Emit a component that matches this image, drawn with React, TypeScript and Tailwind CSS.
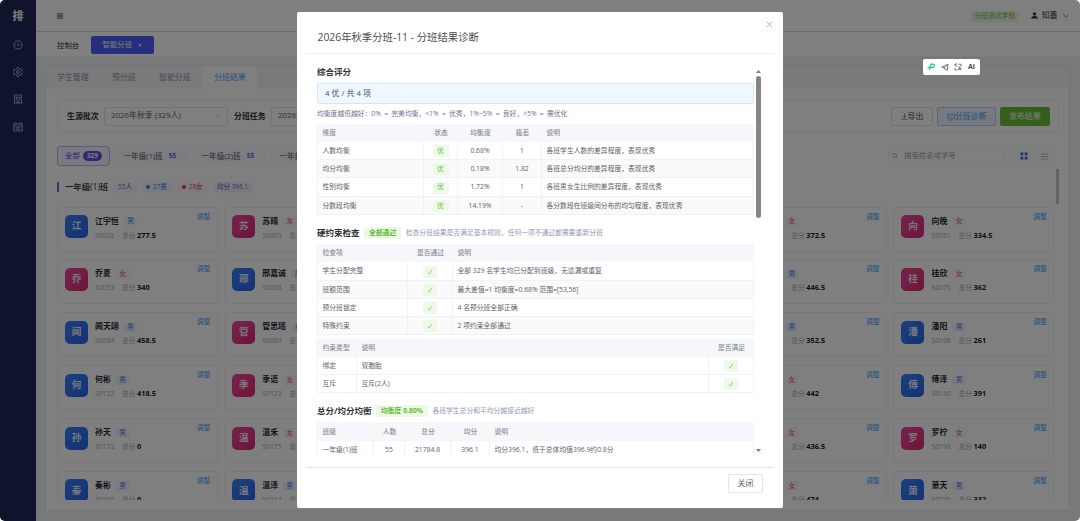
import React from 'react';

type Student = { name: string; g: 'm' | 'f'; id: string; score: string };

const s = (name: string, g: 'm' | 'f', id: string, score: string): Student => ({ name, g, id, score });

const rows: (Student | null)[][] = [
  [s('江宇恒', 'm', 'S0002', '277.5'), s('苏晴', 'f', 'S0003', '301'), null, null, s('林悦', 'f', 'S0037', '372.5'), s('向晚', 'f', 'S0051', '334.5')],
  [s('乔夏', 'f', 'S0053', '340'), s('邢嘉诚', 'm', 'S0058', '322'), null, null, s('周航', 'm', 'S0070', '446.5'), s('桂欣', 'f', 'S0075', '362')],
  [s('闻天翊', 'm', 'S0084', '458.5'), s('管思瑶', 'f', 'S0089', '410'), null, null, s('许诚', 'm', 'S0101', '352.5'), s('潘阳', 'm', 'S0106', '261')],
  [s('何彬', 'm', 'S0122', '418.5'), s('季语', 'f', 'S0123', '388'), null, null, s('叶青', 'f', 'S0142', '442'), s('傅泽', 'm', 'S0150', '391')],
  [s('孙天', 'm', 'S0172', '0'), s('温禾', 'f', 'S0175', '275'), null, null, s('沈月', 'f', 'S0190', '436.5'), s('罗柠', 'f', 'S0199', '140')],
  [s('秦彬', 'm', 'S0210', '0'), s('温泽', 'm', 'S0214', '290'), null, null, s('陆瑶', 'f', 'S0226', '474'), s('萧天', 'm', 'S0230', '332')],
];

function Card({ st }: { st: Student | null }) {
  if (!st) return <div className="h-[45px] rounded-[4px] border border-[#eff0f4]" />;
  const male = st.g === 'm';
  return (
    <div className="flex h-[45px] rounded-[4px] border border-[#eff0f4] pl-[7px] pr-[6.5px] pt-[7.5px]">
      <div
        className={
          'flex h-[23px] w-[23px] shrink-0 items-center justify-center rounded-[5px] text-[9.6px] font-bold text-white/90 ' +
          (male ? 'bg-linear-to-br from-[#3b82f6] to-[#2563eb]' : 'bg-linear-to-br from-[#ec4899] to-[#db2777]')
        }
      >
        {st.name[0]}
      </div>
      <div className="ml-[7px] flex flex-col">
        <div className="mt-[0.5px] flex h-[12px] items-center gap-[5px]">
          <span className="text-[7.9px] font-bold text-[#1f2937]">{st.name}</span>
          <span
            className={
              'flex h-[10px] items-center rounded-[2px] px-[3.5px] text-[6.8px] ' +
              (male ? 'bg-[#f1f5fe] text-[#3b82f6]' : 'bg-[#fcf6f9] text-[#ec4899]')
            }
          >
            {male ? '男' : '女'}
          </span>
        </div>
        <div className="mt-[2px] flex h-[11px] items-baseline text-[6.8px] leading-[11px] text-[#a3a8b2]">
          <span className="w-[27px]">{st.id}</span>
          <span>总分</span>
          <span className="ml-[1.5px] text-[7.3px] leading-[11px] font-bold text-[#111827]">{st.score}</span>
        </div>
      </div>
      <span className="-mt-[3.5px] ml-auto h-[10px] text-[6.8px] leading-[10px] text-[#409eff]">调整</span>
    </div>
  );
}

function Sidebar() {
  return (
    <aside className="flex w-[36px] shrink-0 flex-col items-center bg-[#1e2658] text-[#b9bed6]">
      <div className="flex h-[31px] items-center pt-[1px] text-[11px] font-bold text-white">排</div>
      <div className="mt-[9px] flex flex-col gap-[17.2px]">
        <svg className="h-[10px] w-[10px]" viewBox="0 0 20 20" fill="none" stroke="currentColor" strokeWidth="1.7">
          <path d="M6.500 17.500a8.300 8.300 0 1 1 7 0zM10 12.500V6.500M4.500 10.500h1.500M14 10.500h1.500" />
        </svg>
        <svg className="h-[10px] w-[10px]" viewBox="0 0 20 20" fill="none" stroke="currentColor" strokeWidth="1.7">
          <path d="M8 1.5h4l.8 2.4 1.8 1 2.5-.6 2 3.4L17.300 9.500v1l1.800 1.800-2 3.400-2.500-.6-1.800 1-.8 2.400H8l-.8-2.400-1.800-1-2.500.6-2-3.400 1.800-1.800v-1L.9 7.700l2-3.400 2.500.6 1.800-1z" />
          <circle cx="10" cy="10" r="3.2" />
        </svg>
        <svg className="h-[10px] w-[10px]" viewBox="0 0 20 20" fill="none" stroke="currentColor" strokeWidth="1.6">
          <path d="M3 18V2h14v16M1 18h18M6 6h2.500v2.500H6zM11.500 6H14v2.500h-2.500zM6 11h2.500M11.500 11H14M8 18v-4h4v4" />
        </svg>
        <svg className="h-[10px] w-[10px]" viewBox="0 0 20 20" fill="none" stroke="currentColor" strokeWidth="1.7">
          <path d="M1.500 3.500h17V18h-17zM1.500 8h17M6 1v4M14 1v4M5 11.500h10M5 14.500h10" />
        </svg>
      </div>
    </aside>
  );
}

function ClassChip({ n, w }: { n: string; w: string }) {
  return (
    <div className={'flex h-[20px] shrink-0 items-center justify-center gap-[6px] rounded-[3px] bg-[#f9fafc] pr-[1px] pt-[1px] text-[7.6px] text-[#4b5563] ' + w}>
      {n}
      <span className="text-[6.8px] font-bold text-[#6366f1]">55</span>
    </div>
  );
}

function Page() {
  return (
    <div className="flex h-full w-full">
      <Sidebar />
      <div className="flex w-[1044px] flex-col bg-[#f0f2f5]">
        <header className="flex h-[32px] shrink-0 items-center border-b border-[#d8dbe2] bg-white pl-[21px] pr-[11.500px]">
          <svg className="h-[6px] w-[6px] text-[#303133]" viewBox="0 0 12 12" stroke="currentColor" strokeWidth="1.400">
            <path d="M0 1.500h12M0 4.500h12M0 7.500h12M0 10.500h12" />
          </svg>
          <span className="ml-auto mt-[1px] flex h-[11px] items-center rounded-[2px] bg-[#edf7e8] px-[3.500px] pt-[1px] text-[6.8px] text-[#67c23a]">分班测试学校</span>
          <svg className="ml-[12px] h-[7px] w-[7px] text-[#303133]" viewBox="0 0 14 14" fill="currentColor">
            <circle cx="7" cy="3.800" r="3.300" />
            <path d="M.5 13c0-3.500 2.500-5 6.500-5s6.500 1.500 6.500 5z" />
          </svg>
          <span className="ml-[4px] pt-[0.500px] text-[7.9px] text-[#303133]">知墨</span>
          <svg className="ml-[5px] h-[6px] w-[6px] text-[#606266]" viewBox="0 0 12 12" fill="none" stroke="currentColor" strokeWidth="1.500">
            <path d="M.8 3.500 6 8.500l5.200-5" />
          </svg>
        </header>
        <nav className="flex h-[24px] shrink-0 items-center bg-white pl-[21px] text-[7.4px] text-[#303133]">
          <span className="w-[34px] pt-[3px]">控制台</span>
          <span className="mt-[2px] flex h-[18px] w-[63px] items-center justify-center gap-[5.500px] rounded-[2px] bg-[#4b5efa] pr-[1px] text-white">
            智能分班
            <svg className="h-[4px] w-[4px]" viewBox="0 0 8 8" stroke="currentColor" strokeWidth="1.500">
              <path d="m1 1 6 6M7 1 1 7" />
            </svg>
          </span>
        </nav>
        <main className="ml-[9px] mt-[9px] flex h-[446px] w-[1025px] flex-col border border-[#e6e8ed] bg-white">
          <div className="flex h-[23px] shrink-0 items-stretch bg-[#f3f5f8] text-[7.9px] text-[#909399]">
            <span className="flex w-[55px] items-center pl-[11px]">学生管理</span>
            <span className="flex w-[47px] items-center pl-[11px]">预分班</span>
            <span className="flex w-[55px] items-center pl-[11px]">智能分班</span>
            <span className="flex w-[54px] items-center justify-center bg-white text-[#409eff]">分班结果</span>
          </div>
          <div className="ml-[11px] mt-[10px] flex h-[34px] w-[1002px] shrink-0 items-center rounded-[3px] border border-[#eff0f4] pl-[9px] pr-[8px] text-[7.9px]">
            <span className="w-[37px] shrink-0 pt-[1px] font-bold text-[#303133]">生源批次</span>
            <div className="flex h-[19px] w-[124px] shrink-0 items-center justify-between rounded-[2px] border border-[#e4e6eb] px-[6px] text-[#606266]">
              2026年秋季 (329人)
              <svg className="h-[6px] w-[6px] text-[#b4b8c0]" viewBox="0 0 12 12" fill="none" stroke="currentColor" strokeWidth="1.200">
                <path d="m1 4 5 4 5-4" />
              </svg>
            </div>
            <span className="ml-[6px] w-[37px] shrink-0 pt-[1px] font-bold text-[#303133]">分班任务</span>
            <div className="flex h-[19px] w-[124px] shrink-0 items-center rounded-[2px] border border-[#e4e6eb] px-[6px] text-[#606266]">2026年秋季分班-11</div>
            <div className="ml-auto flex gap-[4px]">
              <span className="flex h-[19px] w-[42px] items-center justify-center rounded-[2px] border border-[#e0e2e8] pt-[1px] text-[#505257]">
                <svg className="h-[7px] w-[7px]" viewBox="0 0 14 14" fill="none" stroke="currentColor" strokeWidth="1.300">
                  <path d="M7 1v8M3.500 6 7 9.500 10.500 6M1 12.500h12" />
                </svg>
                导出
              </span>
              <span className="flex h-[19px] w-[59px] items-center justify-center rounded-[2px] border border-[#a9d2fb] bg-[#ecf5ff] pt-[1px] text-[#409eff]">
                <svg className="h-[8px] w-[8px]" viewBox="0 0 16 16" fill="none" stroke="currentColor" strokeWidth="1.300">
                  <path d="M1 2h14v9H1zM4 14h8M4 8l2.500-2.500 2 2L12 4.500" />
                </svg>
                分班诊断
              </span>
              <span className="flex h-[19px] w-[50px] items-center justify-center rounded-[2px] bg-[#67c23a] pt-[1px] text-white">发布结果</span>
            </div>
          </div>
          <div className="ml-[11px] mt-[13px] flex h-[20px] w-[1002px] shrink-0 items-center">
            <div className="flex h-[20px] w-[53px] shrink-0 items-center justify-center gap-[3px] rounded-[3px] border border-[#b4b6f3] bg-[#f3f3fe] text-[7.4px] text-[#4f46e5]">
              全部
              <span className="flex h-[10px] w-[19px] items-center justify-center rounded-full bg-[#5b55e8] text-[6.2px] font-bold text-white">329</span>
            </div>
            <div className="ml-[4px] flex w-[400px] gap-[5px]">
              <ClassChip n="一年级(1)班" w="w-[73px]" />
              <ClassChip n="一年级(2)班" w="w-[73px]" />
              <ClassChip n="一年级(3)班" w="w-[73px]" />
            </div>
            <div className="ml-auto flex h-[19px] w-[117px] items-center gap-[6px] rounded-[2px] border border-[#f4f5f8] pl-[3px] text-[7.4px] text-[#9ca3af]">
              <svg className="h-[6px] w-[6px]" viewBox="0 0 12 12" fill="none" stroke="currentColor" strokeWidth="1.400">
                <circle cx="5" cy="5" r="4" />
                <path d="m8 8 3.500 3.500" />
              </svg>
              搜索姓名或学号
            </div>
            <div className="ml-[9px] mr-[5px] flex h-[18px] w-[40px] items-center justify-between rounded-[2px] bg-[#f9fafb] px-[6px]">
              <svg className="h-[8px] w-[8px] text-[#3563e9]" viewBox="0 0 16 16" fill="currentColor">
                <path d="M1 1h5.500v5.500H1zM9.500 1H15v5.500H9.500zM1 9.500h5.500V15H1zM9.500 9.500H15V15H9.500z" />
              </svg>
              <svg className="h-[7px] w-[7px] text-[#9ca3af]" viewBox="0 0 14 14" stroke="currentColor" strokeWidth="1.500">
                <path d="M0 2h14M0 7h14M0 12h14" />
              </svg>
            </div>
          </div>
          <div className="ml-[11px] mt-[3px] flex h-[331px] w-[1002px] shrink-0 justify-between overflow-hidden">
            <div className="w-[997px]">
              <div className="mt-[12px] flex h-[12px] items-center">
                <span className="h-[10px] w-[2px] bg-[#4c6ef5]" />
                <span className="ml-[6px] w-[48px] text-[8.4px] font-medium text-[#1f2937]">一年级(1)班</span>
                <div className="flex items-center gap-[5px] text-[6.5px] font-medium text-[#6371d8]">
                  <span className="flex h-[11px] items-center rounded-[2px] bg-[#f7f8fd] px-[5px]">55人</span>
                  <span className="flex h-[11px] w-[31px] items-center gap-[3px] rounded-[2px] bg-[#f4f7fd] pl-[4px] text-[#3b82f6]">
                    <span className="h-[4px] w-[4px] rounded-full bg-[#3b82f6]" />
                    27男
                  </span>
                  <span className="flex h-[11px] w-[30px] items-center gap-[3px] rounded-[2px] bg-[#fcf6f9] pl-[4px] text-[#e84393]">
                    <span className="h-[4px] w-[4px] rounded-full bg-[#e82a6f]" />
                    28女
                  </span>
                  <span className="flex h-[11px] items-center rounded-[2px] bg-[#f5f5fd] px-[4px]">均分 396.1</span>
                </div>
              </div>
              <div className="mt-[13.500px] grid grid-cols-[repeat(6,160.800px)] gap-x-[6.500px] gap-y-[7.900px]">
                {rows.map((r, i) => r.map((st, j) => <Card key={i + '-' + j} st={st} />))}
              </div>
            </div>
            <div className="h-[35px] w-[3px] bg-[#c4c7cd]" />
          </div>
        </main>
      </div>
    </div>
  );
}

function Pill({ children, w }: { children: React.ReactNode; w: string }) {
  return <span className={'inline-flex h-[12px] items-center justify-center rounded-[2px] bg-[#eef9e9] text-[6.8px] text-[#67c23a] ' + w}>{children}</span>;
}

function Check() {
  return (
    <Pill w="w-[14px]">
      <svg className="h-[6px] w-[6px]" viewBox="0 0 12 12" fill="none" stroke="currentColor" strokeWidth="1.300">
        <path d="M2.500 7.500 4.500 10.500 9.500 1.500" />
      </svg>
    </Pill>
  );
}

function Table({ cols, head, body, center }: { cols: string; head: string[]; body: React.ReactNode[][]; center: number[] }) {
  return (
    <div className="w-[437px] shrink-0 border-l border-[#f0f2f6] text-[6.8px] text-[#606266]">
      <div className={'grid h-[18.300px] bg-[#f5f7fa] font-medium text-[#8b8e95] ' + cols}>
        {head.map((h, i) => (
          <span key={i} className={'flex items-center px-[4.500px] pt-[0.500px] ' + (center.includes(i) ? 'justify-center' : '')}>
            {h}
          </span>
        ))}
      </div>
      {body.map((r, k) => (
        <div key={k} className={'grid h-[18.100px] ' + (k % 2 && body.length > 2 ? 'bg-[#fafafa] ' : '') + cols}>
          {r.map((c, i) => (
            <span key={i} className={'flex items-center border-b border-r border-[#f0f2f6] px-[4.500px] pt-[1px] whitespace-nowrap ' + (center.includes(i) ? 'justify-center' : '')}>
              {c}
            </span>
          ))}
        </div>
      ))}
    </div>
  );
}

function Heading({ title, tag, note }: { title: string; tag: string; note: string }) {
  return (
    <div className="flex h-[12px] shrink-0 items-center gap-[4.500px]">
      <span className="text-[8.500px] font-bold text-[#303133]">{title}</span>
      <span className="flex h-[12px] items-center rounded-[2px] bg-[#edf8e7] px-[5px] text-[6.8px] font-bold text-[#5dbb2f]">{tag}</span>
      <span className="text-[6.8px] text-[#909ab5]">{note}</span>
    </div>
  );
}

function Dialog() {
  const ok = <Pill w="w-[16px]">优</Pill>;
  return (
    <div className="mt-[12.400px] flex h-[496px] w-[486px] flex-col rounded-[2px] bg-white">
      <div className="flex h-[25px] shrink-0 items-center justify-end pr-[10.500px]">
        <svg className="h-[7px] w-[7px] text-[#909399]" viewBox="0 0 12 12" stroke="currentColor" strokeWidth="1.200">
          <path d="m1.500 1.500 9 9M10.500 1.500l-9 9" />
        </svg>
      </div>
      <div className="mx-[9px] -mt-[8px] flex h-[24.600px] shrink-0 border-b border-[#ebeef5] pl-[11.500px] text-[10.350px] leading-[17px] text-[#4a4c50]">2026年秋季分班-11 - 分班结果诊断</div>
      <div className="mt-[12px] flex h-[390px] shrink-0 overflow-hidden pl-[20px]">
        <div className="flex w-[437px] flex-col overflow-hidden">
          <div className="h-[12px] shrink-0 text-[8.500px] leading-[12px] font-bold text-[#303133]">综合评分</div>
          <div className="mt-[5px] flex h-[21px] shrink-0 items-center rounded-[2px] border border-[#cfeaf5] bg-[#eff8fe] pl-[7px] pt-[0.500px] text-[7.900px] text-[#44505f]">4 优 / 共 4 项</div>
          <div className="mt-[4px] mb-[5px] h-[11px] shrink-0 text-[6.800px] leading-[11px] text-[#6d7590] [word-spacing:1.500px]">均衡度越低越好：0% = 完美均衡，&lt;1% = 优秀，1%~5% = 良好，&gt;5% = 需优化</div>
          <Table
            cols="grid-cols-[106px_34px_45px_39px_1fr]"
            center={[1, 2, 3]}
            head={['维度', '状态', '均衡度', '极差', '说明']}
            body={[
              ['人数均衡', ok, '0.68%', '1', '各班学生人数的差异程度，表现优秀'],
              ['均分均衡', ok, '0.18%', '1.82', '各班总分均分的差异程度，表现优秀'],
              ['性别均衡', ok, '1.72%', '1', '各班男女生比例的差异程度，表现优秀'],
              ['分数段均衡', ok, '14.19%', '-', '各分数段在班级间分布的均匀程度，表现优秀'],
            ]}
          />
          <div className="h-[12.500px] shrink-0" />
          <Heading title="硬约束检查" tag="全部通过" note="检查分班结果是否满足基本规则，任何一项不通过都需要重新分班" />
          <div className="h-[5px] shrink-0" />
          <Table
            cols="grid-cols-[90px_45px_1fr]"
            center={[1]}
            head={['检查项', '是否通过', '说明']}
            body={[
              ['学生分配完整', <Check />, '全部 329 名学生均已分配到班级，无遗漏或重复'],
              ['班额范围', <Check />, '最大差值=1 均衡度=0.68% 范围=[53,56]'],
              ['预分班锁定', <Check />, '4 名预分班全部正确'],
              ['特殊约束', <Check />, '2 项约束全部通过'],
            ]}
          />
          <div className="h-[4px] shrink-0" />
          <Table
            cols="grid-cols-[39px_352px_1fr]"
            center={[2]}
            head={['约束类型', '说明', '是否满足']}
            body={[
              ['绑定', '双胞胎', <Check />],
              ['互斥', '互斥(2人)', <Check />],
            ]}
          />
          <div className="h-[12px] shrink-0" />
          <Heading title="总分/均分均衡" tag="均衡度 0.80%" note="各班学生总分和平均分越接近越好" />
          <div className="h-[5px] shrink-0" />
          <Table
            cols="grid-cols-[56px_31px_46px_39px_1fr]"
            center={[1, 2, 3]}
            head={['班级', '人数', '总分', '均分', '说明']}
            body={[['一年级(1)班', '55', '21784.8', '396.1', '均分396.1，低于总体均值396.9约0.8分']]}
          />
        </div>
        <div className="ml-[1px] flex w-[7px] flex-col items-center pt-[4px] pb-[4px]">
          <svg className="h-[3px] w-[5px] shrink-0" viewBox="0 0 10 6" fill="#7a7a7a">
            <path d="M5 0l5 6H0z" />
          </svg>
          <div className="mt-[3px] h-[142px] w-[5px] shrink-0 rounded-full bg-[#858585]" />
          <svg className="mt-auto h-[3px] w-[5px] shrink-0" viewBox="0 0 10 6" fill="#7a7a7a">
            <path d="M5 6l5-6H0z" />
          </svg>
        </div>
      </div>
      <div className="mx-[9px] mt-[11px] flex h-[40px] justify-end border-t border-[#e4e7ed] pr-[11px] pt-[6px]">
        <button className="flex h-[19px] w-[35px] items-center justify-center rounded-[2px] border border-[#e2e4ea] text-[7.900px] text-[#606266]">关闭</button>
      </div>
    </div>
  );
}

function FloatingTools() {
  return (
    <div className="absolute left-[923px] top-[59px] flex h-[16px] w-[57px] items-center justify-between rounded-[2px] bg-white px-[4px] text-[#44464a]">
      <svg className="h-[8px] w-[8px]" viewBox="0 0 16 16" fill="none" stroke="#1fce94" strokeWidth="2.600">
        <path d="M1 9h8c4 0 6-1.500 6-3.500S13.500 2.500 12 2.500H7.500M8 2.500 5 14" />
      </svg>
      <svg className="h-[8px] w-[8px]" viewBox="0 0 16 16" fill="none" stroke="currentColor" strokeWidth="1.500">
        <path d="M14 2.500 1.500 8 6 10l3 3.500 4 .5zM6 10l5-4" />
      </svg>
      <svg className="h-[8px] w-[8px]" viewBox="0 0 16 16" fill="none" stroke="currentColor" strokeWidth="1.500">
        <path d="M2 6.500V2h4M3 5l4 2M9 2.500h5V7M2 10v4h4M8 14.500l3-7 3.500 7M9.500 12h4" />
      </svg>
      <span className="w-[8px] text-[7px] leading-[8px] font-bold">Ai</span>
    </div>
  );
}

export default function App() {
  return (
    <div className="h-[521px] w-[1080px] bg-white font-['Open_Sans','Noto_Sans_CJK_SC',sans-serif]">
      <div className="relative h-full w-full overflow-hidden rounded-[5px]">
        <Page />
        <div className="absolute inset-0 flex items-start justify-center bg-black/50">
          <Dialog />
        </div>
        <FloatingTools />
      </div>
    </div>
  );
}
